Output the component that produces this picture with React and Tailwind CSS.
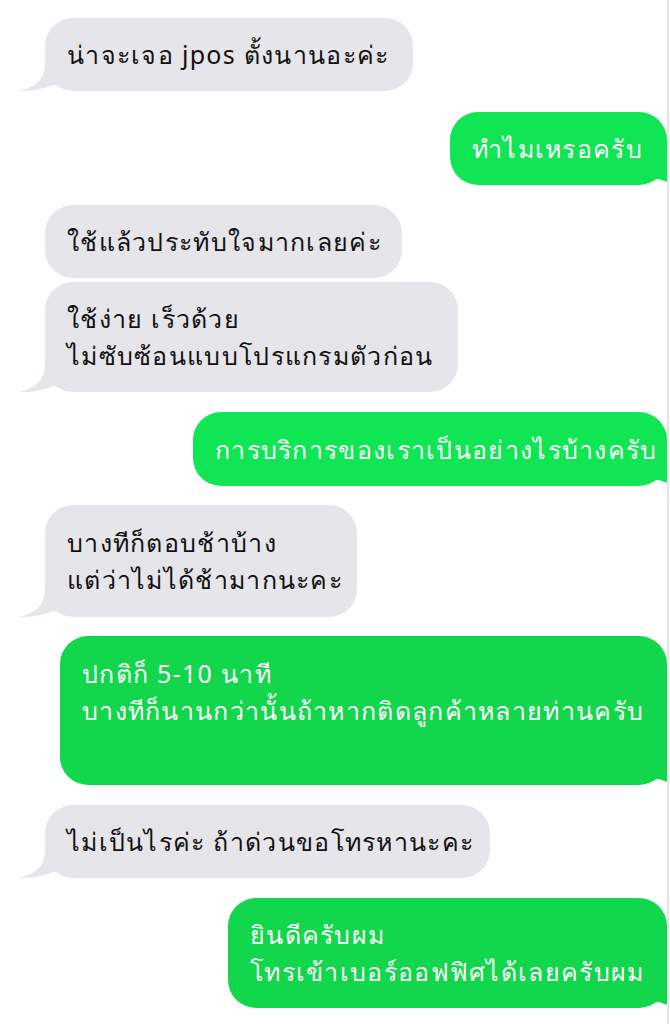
const FONT = "font-['Tahoma','Noto_Sans','DejaVu_Sans',sans-serif]";

const messages = [
  { me: false, tail: true, w: 'w-[368px] h-[73px]', lines: ['น่าจะเจอ jpos ตั้งนานอะค่ะ'], gap: 'mt-[18px]' },
  { me: true, tail: true, w: 'w-[217px] h-[73px]', lines: ['ทำไมเหรอครับ'], gap: 'mt-[21px]' },
  { me: false, tail: false, w: 'w-[357px] h-[73px]', lines: ['ใช้แล้วประทับใจมากเลยค่ะ'], gap: 'mt-[20px]' },
  { me: false, tail: true, w: 'w-[413px] h-[110px]', lines: ['ใช้ง่าย เร็วด้วย', 'ไม่ซับซ้อนแบบโปรแกรมตัวก่อน'], gap: 'mt-[4px]' },
  { me: true, tail: true, w: 'w-[474px] h-[74px]', lines: ['การบริการของเราเป็นอย่างไรบ้างครับ'], gap: 'mt-[20px]' },
  { me: false, tail: true, w: 'w-[312px] h-[112px]', lines: ['บางทีก็ตอบช้าบ้าง', 'แต่ว่าไม่ได้ช้ามากนะคะ'], gap: 'mt-[19px]' },
  { me: true, tail: true, w: 'w-[607px] h-[149px]', lines: ['ปกติก็ 5-10 นาที', 'บางทีก็นานกว่านั้นถ้าหากติดลูกค้าหลายท่านครับ', ''], gap: 'mt-[19px]', dark: true },
  { me: false, tail: true, w: 'w-[445px] h-[73px]', lines: ['ไม่เป็นไรค่ะ ถ้าด่วนขอโทรหานะคะ'], gap: 'mt-[20px]' },
  { me: true, tail: true, w: 'w-[439px] h-[110px]', lines: ['ยินดีครับผม', 'โทรเข้าเบอร์ออฟฟิศได้เลยครับผม'], gap: 'mt-[20px]', dark: true },
];

function LeftTail() {
  return (
    <svg className="absolute left-[-26px] bottom-0" width="40" height="30" viewBox="0 0 40 30">
      <path d="M26 0 C26 16 20 25 0 30 C14 30 24 28 34 24 L40 24 L40 0 Z" fill="#e5e5ea" />
    </svg>
  );
}

function RightTail({ color }) {
  return (
    <svg className="absolute right-[-26px] bottom-0" width="40" height="30" viewBox="0 0 40 30">
      <path d="M14 0 C14 16 20 25 40 30 C26 30 16 28 6 24 L0 24 L0 0 Z" fill={color} />
    </svg>
  );
}

function Bubble({ me, tail, lines, dark, w }) {
  const green = dark ? '#12d64b' : '#10e654';
  return (
    <div className={`flex ${me ? 'justify-end' : 'justify-start pl-[45px]'}`}>
      <div
        className={`relative flex flex-col justify-center ${w} rounded-[28px] px-[22px] text-[25px] leading-[37px] tracking-[1.3px] whitespace-nowrap ${me ? 'text-white' : 'text-[#111]'}`}
        style={{ background: me ? green : '#e5e5ea' }}
      >
        {tail && (me ? <RightTail color={green} /> : <LeftTail />)}
        {lines.map((l, i) => (
          <div key={i} className="relative">{l || '\u00a0'}</div>
        ))}
      </div>
    </div>
  );
}

export default function App() {
  return (
    <div className={`flex w-[670px] h-[1024px] bg-white ${FONT}`}>
      <div className="w-[669px] h-full overflow-hidden border-r-2 border-[#e4e4e4]">
        {messages.map((m, i) => (
          <div key={i} className={m.gap}>
            <Bubble {...m} />
          </div>
        ))}
      </div>
    </div>
  );
}
